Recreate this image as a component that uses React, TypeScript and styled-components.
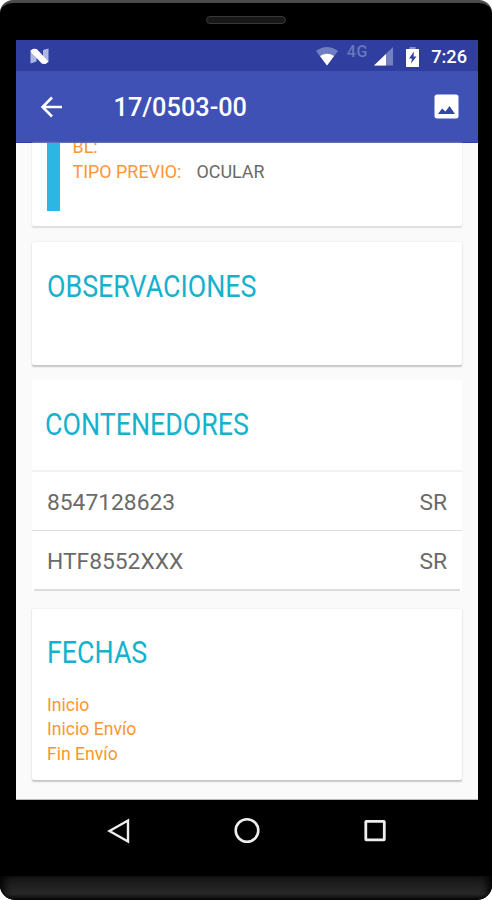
import React from "react";
import styled, { createGlobalStyle } from "styled-components";

const GlobalStyle = createGlobalStyle`
  * { box-sizing: border-box; }
  body { margin: 0; background: #fff; font-family: Roboto, "Liberation Sans", sans-serif; }
  svg { display: block; flex: none; }
`;

const Phone = styled.div`
  width: 492px;
  height: 900px;
  display: flex;
  flex-direction: column;
  background: #000;
  border-top: 3px solid #4b4b4b;
  border-radius: 13px 13px 15px 15px;
  overflow: hidden;
`;

const Earpiece = styled.div`
  height: 37px;
  flex: none;
  display: flex;
  justify-content: center;
  padding-top: 13px;
`;

const Speaker = styled.div`
  width: 80px;
  height: 8px;
  border: 1px solid #393939;
  border-radius: 4px;
  background: #181818;
`;

const Screen = styled.div`
  width: 462px;
  height: 760px;
  flex: none;
  margin-left: 15.5px;
  display: flex;
  flex-direction: column;
  background: #fafafa;
  overflow: hidden;
  border-bottom: 1px solid #bbb;
`;

const StatusBar = styled.div`
  height: 31px;
  flex: none;
  display: flex;
  align-items: center;
  padding: 2px 10.5px 0 14px;
  background: #303f9f;
  color: #fff;
`;

const StatusIcons = styled.div`
  margin-left: auto;
  display: flex;
  align-items: center;
`;

const Network = styled.span`
  margin: -10px 6px 0 9px;
  font-size: 16px;
  line-height: 18px;
  font-weight: 500;
  letter-spacing: 0.7px;
  color: #6b76bb;
`;

const Clock = styled.span`
  margin-left: 12px;
  font-size: 18.2px;
  font-weight: 500;
  line-height: 22px;
`;

const Toolbar = styled.div`
  height: 72px;
  flex: none;
  display: flex;
  align-items: center;
  padding: 0 18.5px 0 24px;
  background: #3f51b5;
  border-bottom: 1px solid #2d3f9f;
  color: #fff;
`;

const Title = styled.h1`
  margin: 2px auto 0 51px;
  font-size: 25.3px;
  line-height: 30px;
  font-weight: 500;
`;

const Content = styled.main`
  flex: 1;
  min-height: 0;
  padding: 0 15.5px 0 16.5px;
`;

const Card = styled.section<{ $height: number; $gap: number }>`
  height: ${(p) => p.$height}px;
  margin-bottom: ${(p) => p.$gap}px;
  padding: 0 15px;
  background: #fff;
  border-radius: 2px;
  box-shadow: 0 1.5px 1.5px #c6c6c6, 0 0 2px #e2e2e2;
`;

const DetailCard = styled(Card)`
  display: flex;
  border-radius: 0 0 2px 2px;
  box-shadow: 0 1.5px 1.5px #dedede, 0 0 2px #e6e6e6;
`;

const Accent = styled.div`
  width: 12.5px;
  height: 68px;
  background: #2bb6e3;
`;

const Details = styled.div`
  height: 50px;
  margin-left: 13px;
  overflow: hidden;
  display: flex;
  flex-direction: column;
`;

const Field = styled.div`
  display: flex;
  gap: 15px;
  height: 24.5px;
  flex: none;
  font-size: 17.9px;
  line-height: 24.5px;
  color: #6a6a6a;
  &:first-child { margin-top: -8px; }
`;

const Label = styled.span`
  color: #ff9636;
`;

const Heading = styled.h2<{ $top: number }>`
  margin: 0;
  padding-top: ${(p) => p.$top}px;
  width: max-content;
  font-size: 31px;
  line-height: 36px;
  font-weight: 380;
  color: #15b2cd;
  transform: scaleX(0.865);
  transform-origin: left;
`;

const ContainerList = styled.section`
  height: 211px;
  margin-bottom: 18px;
  background: #fff;
`;

const ListHeader = styled.div`
  height: 92px;
  padding: 0 13px;
  border-bottom: 2px solid #f2f2f2;
`;

const ContainerRow = styled.div<{ $last?: boolean }>`
  height: ${(p) => (p.$last ? 60 : 59)}px;
  display: flex;
  justify-content: space-between;
  align-items: center;
  margin: 0 ${(p) => (p.$last ? 2 : 0)}px;
  padding: 2px ${(p) => (p.$last ? 13 : 15)}px 0;
  border-bottom: ${(p) => (p.$last ? "2px solid #dcdcdc" : "1px solid #dedede")};
  font-size: 22.8px;
  color: #6a6a6a;
`;

const Dates = styled.div`
  margin-top: 22px;
  font-size: 17.6px;
  line-height: 24.4px;
  color: #fb962e;
`;

const NavBar = styled.nav`
  height: 76px;
  flex: none;
  display: flex;
  justify-content: center;
  align-items: center;
  gap: 100px;
  padding: 0 0 15px 1px;
`;

const Chin = styled.div`
  flex: 1;
  background: linear-gradient(#161616, #282828 75%, #080808);
  box-shadow: inset 8px 0 8px -4px #000, inset -8px 0 8px -4px #000;
`;

const AndroidN = () => (
  <svg width="19" height="17" viewBox="0 0 19 17">
    <path d="M.5 2.5 3 1 6.5 3v10.5L.5 15.5ZM13 2l5.5-1.5V14L16 15.5l-3-1Z" fill="#aeb6e3" />
    <path d="M.8 2.2 3.5.8 6.8 1 18.3 13.5 15.5 16l-3.5-.3L.8 4Z" fill="#fff" />
  </svg>
);

const Wifi = () => (
  <svg width="22" height="19" viewBox="0 0 22 19">
    <path d="M0 4Q11-4 22 4L11 18.5Z" fill="#717dc1" />
    <path d="M4 9Q11 4.5 18 9l-7 9.5Z" fill="#fff" />
  </svg>
);

const Signal = () => (
  <svg width="19" height="19" viewBox="0 0 19 19">
    <path d="M19 0v18.5H0Z" fill="#7480c4" />
    <path d="M12 7v11.5H0Z" fill="#fff" />
  </svg>
);

const Battery = () => (
  <BatterySvg width="13" height="20" viewBox="0 0 13 20">
    <path d="M0 2h13v18H0Z" fill="#fff" />
    <path d="M3.5 0h6v2h-6Z" fill="#8993cb" />
    <path d="m8 4.5-5 7h3l-1 5 5.5-7h-3Z" fill="#303f9f" />
  </BatterySvg>
);

const BatterySvg = styled.svg`
  margin-left: 13px;
`;

const BackArrow = () => (
  <svg width="23" height="22" viewBox="0 0 23 22" fill="none" stroke="#fff" strokeWidth="2.5">
    <path d="M12 1.5 2.5 11l9.5 9.5M2.5 11H22" />
  </svg>
);

const Photo = () => (
  <svg width="25" height="25" viewBox="0 0 25 25">
    <rect x=".5" y=".5" width="24" height="24" rx="2.5" fill="#fff" />
    <path d="m4 20 4-5.5 3.5 3 4-5.5 5.5 8Z" fill="#3546aa" />
  </svg>
);

export default function App() {
  return (
    <>
      <GlobalStyle />
      <Phone>
        <Earpiece><Speaker /></Earpiece>
        <Screen>
          <StatusBar>
            <AndroidN />
            <StatusIcons>
              <Wifi />
              <Network>4G</Network>
              <Signal />
              <Battery />
              <Clock>7:26</Clock>
            </StatusIcons>
          </StatusBar>
          <Toolbar>
            <BackArrow />
            <Title>17/0503-00</Title>
            <Photo />
          </Toolbar>
          <Content>
            <DetailCard $height={83} $gap={16}>
              <Accent />
              <Details>
                <Field><Label>BL:</Label></Field>
                <Field><Label>TIPO PREVIO:</Label><span>OCULAR</span></Field>
              </Details>
            </DetailCard>
            <Card $height={123} $gap={15}>
              <Heading $top={27}>OBSERVACIONES</Heading>
            </Card>
            <ContainerList>
              <ListHeader><Heading $top={27}>CONTENEDORES</Heading></ListHeader>
              <ContainerRow><span>8547128623</span><span>SR</span></ContainerRow>
              <ContainerRow $last><span>HTF8552XXX</span><span>SR</span></ContainerRow>
            </ContainerList>
            <Card $height={171} $gap={0}>
              <Heading $top={26}>FECHAS</Heading>
              <Dates>
                <div>Inicio</div>
                <div>Inicio Envío</div>
                <div>Fin Envío</div>
              </Dates>
            </Card>
          </Content>
        </Screen>
        <NavBar>
          <svg width="28" height="28" viewBox="0 0 28 28" fill="none" stroke="#eee" strokeWidth="2.4">
            <path d="M23 3.5v21L4.5 14Z" />
          </svg>
          <svg width="28" height="28" viewBox="0 0 28 28" fill="none" stroke="#eee" strokeWidth="2.6">
            <circle cx="14" cy="13.5" r="11.3" />
          </svg>
          <svg width="28" height="28" viewBox="0 0 28 28" fill="none" stroke="#eee" strokeWidth="2.8">
            <rect x="4.8" y="4.3" width="18.5" height="18.5" rx=".5" />
          </svg>
        </NavBar>
        <Chin />
      </Phone>
    </>
  );
}
